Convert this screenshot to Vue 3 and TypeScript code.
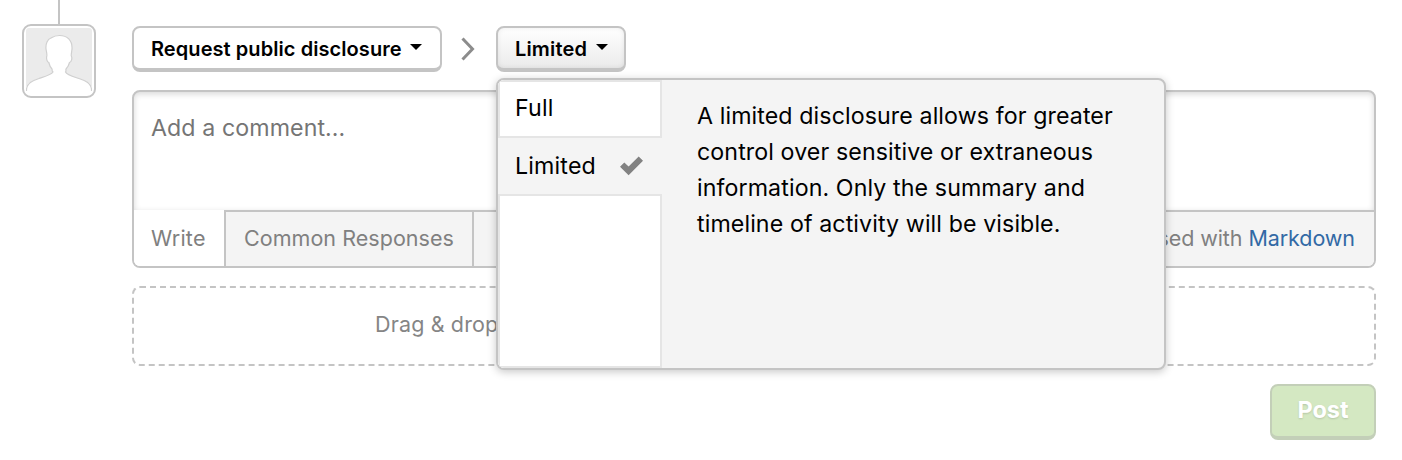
<script setup lang="ts">
import { computed, ref } from 'vue'

interface Option {
  label: string
  description: string
}

const options: Option[] = [
  { label: 'Full', description: 'A full disclosure makes the whole report visible.' },
  {
    label: 'Limited',
    description:
      'A limited disclosure allows for greater\ncontrol over sensitive or extraneous\ninformation. Only the summary and\ntimeline of activity will be visible.',
  },
]
const selectedIndex = ref(1)
const selected = computed(() => options[selectedIndex.value])
const comment = ref('')
</script>

<template>
  <div class="page">
    <aside class="rail">
      <div class="line"></div>
      <div class="avatar">
        <svg width="66" height="66" viewBox="0 0 66 66">
          <rect width="66" height="66" rx="3" fill="#ebebeb" />
          <path
            d="M0 66V60C1 54.500 7 52.500 13 50.500C18 48.800 25 47 27 44C25.500 43 26.500 42 26 41C24.500 39.500 23.500 37.500 22.800 34.500C20.800 34 20.200 30 20.800 28C21.200 26.500 20.500 24 20 21C19.500 16 21.500 11 25 10C28 8 31 7.500 33.500 7.500C41 7.500 46.500 12 46 21C45.700 24 45 26.500 45.300 28C46.500 30 45.500 34 43.500 34.500C42.800 37.500 41.500 39.500 40 41C39.500 42 40.500 43 39.500 44C41 47 48 48.800 53 50.500C59 52.500 65 54.500 66 60V66Z"
            fill="#fff"
          />
          <path
            d="M0.500 63C0 55 7 52.500 13 50.500C18 48.800 25 47 27 44C25.500 43 26.500 42 26 41C24.500 39.500 23.500 37.500 22.800 34.500C20.800 34 20.200 30 20.800 28C21.200 26.500 20.500 24 20 21C19.500 16 21.500 11 25 10C28 8 31 7.500 33.500 7.500C41 7.500 46.500 12 46 21C45.700 24 45 26.500 45.300 28C46.500 30 45.500 34 43.500 34.500C42.800 37.500 41.500 39.500 40 41C39.500 42 40.500 43 39.500 44C41 47 48 48.800 53 50.500C59 52.500 66 55 65.500 63"
            fill="none"
            stroke="#d0d0d0"
            stroke-width="1.2"
          />
        </svg>
      </div>
    </aside>

    <main class="main">
      <div class="actions">
        <button class="btn request">
          <span class="request-label">Request public disclosure</span>
          <svg class="caret" width="12" height="6" viewBox="0 0 12 6"><path d="M0 0H12L6 6Z" /></svg>
        </button>
        <svg class="chevron" width="14" height="24" viewBox="0 0 14 24">
          <path d="M1.500 1.500L11.500 12L1.500 22.500" fill="none" stroke="#8c8c8c" stroke-width="3" />
        </svg>
        <div class="picker">
          <button class="btn level">
            <span class="level-label">{{ selected.label }}</span>
            <svg class="caret" width="12" height="6" viewBox="0 0 12 6"><path d="M0 0H12L6 6Z" /></svg>
          </button>
          <div class="menu">
            <div class="list">
              <div
                v-for="(o, i) in options"
                :key="o.label"
                class="option"
                :class="{ active: i === selectedIndex }"
                @click="selectedIndex = i"
              >
                <span>{{ o.label }}</span>
                <svg v-if="i === selectedIndex" width="24" height="20" viewBox="0 0 24 20">
                  <path d="M0 10.800L4.300 6.500L8.600 10.600L18.700 0.600L23 4.800L8.600 19.200Z" fill="#828282" />
                </svg>
              </div>
              <div class="filler"></div>
            </div>
            <p class="description">{{ selected.description }}</p>
          </div>
        </div>
      </div>

      <section class="editor">
        <textarea v-model="comment" class="input" placeholder="Add a comment..."></textarea>
        <div class="tabs">
          <div class="tab write"><span>Write</span></div>
          <div class="tab common"><span>Common Responses</span></div>
          <div class="hint">Parsed with <a>Markdown</a></div>
        </div>
      </section>

      <div class="dropzone"><span>Drag &amp; drop or select more files from your computer</span></div>

      <div class="footer"><button class="post"><span>Post</span></button></div>
    </main>
  </div>
</template>

<style>
body {
  margin: 0;
  background: #fff;
}
</style>

<style scoped>
* {
  box-sizing: border-box;
}
.page {
  display: flex;
  width: 1402px;
  height: 460px;
  overflow: hidden;
  padding-left: 22px;
  background: #fff;
  color: #000;
  font-family: Inter, "Liberation Sans", sans-serif;
}
.rail {
  width: 74px;
  margin-right: 36px;
  display: flex;
  flex-direction: column;
  align-items: center;
}
.line {
  width: 2px;
  height: 24px;
  background: #c4c4c4;
}
.avatar {
  width: 74px;
  height: 74px;
  border: 2px solid #c4c4c4;
  border-radius: 9px;
  padding: 2px;
}
.avatar svg {
  display: block;
}
.main {
  width: 1244px;
  padding-top: 26px;
}
.actions {
  display: flex;
  height: 46px;
}
.btn {
  display: flex;
  height: 46px;
  margin: 0;
  padding: 0 0 0 17px;
  border: 2px solid #c4c4c4;
  border-bottom-width: 4px;
  border-radius: 8px;
  background: #fff;
  color: #000;
  font-family: inherit;
  font-weight: 600;
  font-size: 20px;
  line-height: 42px;
  white-space: nowrap;
  text-align: left;
}
.request {
  width: 310px;
}
.request-label {
  width: 259px;
  letter-spacing: 0.07px;
}
.level {
  width: 130px;
  background: linear-gradient(#fff, #ebebeb);
  box-shadow: inset 0 0 5px rgba(0, 0, 0, 0.08);
}
.level-label {
  width: 81px;
  letter-spacing: 0.15px;
}
.caret {
  margin-top: 16px;
}
.chevron {
  margin: 11px 21px 0 19px;
  flex: none;
}
.picker {
  position: relative;
  width: 130px;
}
.menu {
  position: absolute;
  z-index: 2;
  top: 52px;
  left: 0;
  display: flex;
  width: 670px;
  height: 292px;
  border: 2px solid #c4c4c4;
  border-radius: 8px;
  background: #f4f4f4;
  box-shadow: 0 2px 8px rgba(0, 0, 0, 0.22);
  overflow: hidden;
}
.list {
  display: flex;
  flex-direction: column;
  width: 164px;
  font-size: 23.2px;
  letter-spacing: 0.18px;
  line-height: 52px;
}
.option {
  display: flex;
  justify-content: space-between;
  height: 58px;
  padding: 0 16px 0 15px;
  border: 2px solid #e5e5e5;
  background: #fff;
}
.option svg {
  margin-top: 16px;
}
.option.active {
  height: 56px;
  border-color: transparent;
  background: #f4f4f4;
}
.filler {
  flex: 1;
  border: 2px solid #e5e5e5;
  background: #fff;
}
.description {
  margin: 18px 0 0 35px;
  font-size: 23.2px;
  letter-spacing: 0.1px;
  line-height: 36px;
  white-space: pre;
}
.editor {
  height: 178px;
  margin-top: 18px;
  border: 2px solid #c4c4c4;
  border-radius: 8px;
  overflow: hidden;
}
.input {
  display: block;
  width: 100%;
  height: 118px;
  margin: 0;
  padding: 18px 17px;
  border: 0;
  outline: 0;
  resize: none;
  background: transparent;
  box-shadow: inset 0 2px 6px rgba(0, 0, 0, 0.16);
  font-family: inherit;
  font-size: 23.2px;
  letter-spacing: 0.08px;
  line-height: 36px;
}
.input::placeholder {
  color: #757575;
  opacity: 1;
}
.tabs {
  display: flex;
  height: 56px;
  background: #f4f4f4;
  color: #808080;
  font-size: 21.5px;
  letter-spacing: 0.04px;
  line-height: 52px;
  white-space: nowrap;
}
.tab {
  padding-left: 18px;
}
.write {
  width: 90px;
  padding-top: 2px;
  padding-left: 17px;
  letter-spacing: 0.25px;
  background: #fff;
}
.common {
  width: 250px;
  border: solid #c4c4c4;
  border-width: 2px 2px 0;
}
.hint {
  flex: 1;
  padding-right: 19px;
  border-top: 2px solid #c4c4c4;
  letter-spacing: -0.08px;
  text-align: right;
}
.hint a {
  color: #3269a5;
}
.dropzone {
  height: 80px;
  margin-top: 18px;
  padding-left: 241px;
  border: 2px dashed #c4c4c4;
  border-radius: 8px;
  color: #858585;
  font-size: 21.5px;
  letter-spacing: 0.15px;
  line-height: 72px;
  white-space: nowrap;
}
.footer {
  display: flex;
  justify-content: flex-end;
  margin-top: 18px;
}
.post {
  width: 106px;
  height: 56px;
  padding: 0 0 2px;
  border: 2px solid #c3cfb8;
  border-bottom-width: 4px;
  border-radius: 8px;
  background: #d4e8c2;
  color: #fff;
  font-family: inherit;
  font-weight: 700;
  font-size: 23.5px;
  line-height: 48px;
  text-shadow: 0 1px 2px rgba(0, 0, 0, 0.15);
}
</style>
